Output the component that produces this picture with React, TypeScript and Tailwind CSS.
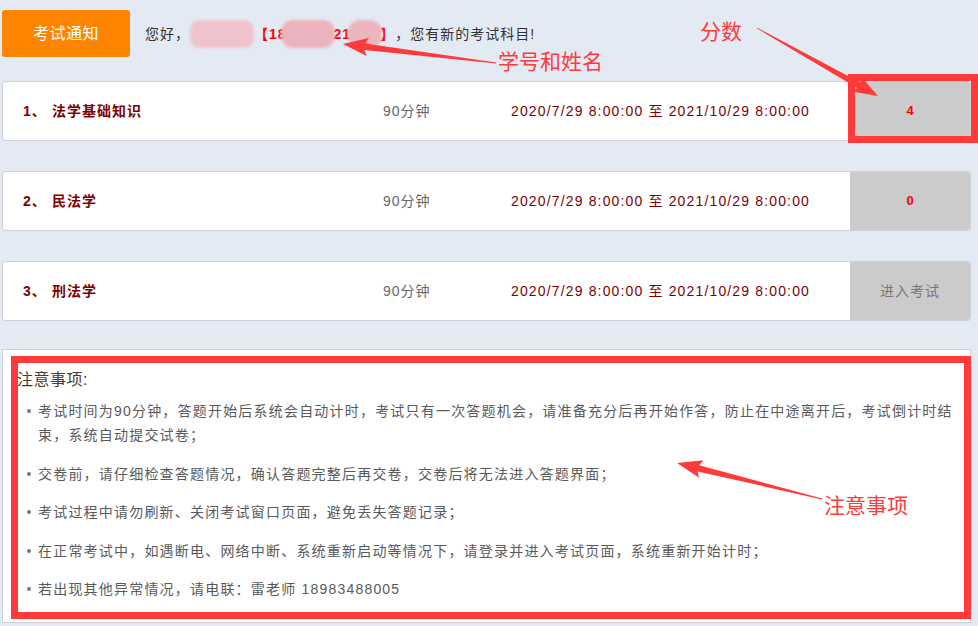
import React from 'react';

type Pt = [number, number];

// tapered annotation arrow: thin tail, wide shaft near the head, triangle head
const arrowPoints = (tail: Pt, tip: Pt, headLen = 22, headHalf = 9, shaftHalf = 3.2) => {
  const dx = tip[0] - tail[0];
  const dy = tip[1] - tail[1];
  const len = Math.hypot(dx, dy);
  const ux = dx / len;
  const uy = dy / len;
  const nx = -uy;
  const ny = ux;
  const bx = tip[0] - ux * headLen;
  const by = tip[1] - uy * headLen;
  const pts: Pt[] = [
    [tail[0] + nx * 0.4, tail[1] + ny * 0.4],
    [bx + nx * shaftHalf, by + ny * shaftHalf],
    [bx - ux * 3 + nx * headHalf, by - uy * 3 + ny * headHalf],
    tip,
    [bx - ux * 3 - nx * headHalf, by - uy * 3 - ny * headHalf],
    [bx - nx * shaftHalf, by - ny * shaftHalf],
    [tail[0] - nx * 0.4, tail[1] - ny * 0.4],
  ];
  return pts.map((p) => `${p[0].toFixed(1)},${p[1].toFixed(1)}`).join(' ');
};

const exams = [
  { no: 1, name: '法学基础知识', score: '4' },
  { no: 2, name: '民法学', score: '0' },
  { no: 3, name: '刑法学', score: null },
];

const notes = [
  '考试时间为90分钟，答题开始后系统会自动计时，考试只有一次答题机会，请准备充分后再开始作答，防止在中途离开后，考试倒计时结束，系统自动提交试卷；',
  '交卷前，请仔细检查答题情况，确认答题完整后再交卷，交卷后将无法进入答题界面；',
  '考试过程中请勿刷新、关闭考试窗口页面，避免丢失答题记录；',
  '在正常考试中，如遇断电、网络中断、系统重新启动等情况下，请登录并进入考试页面，系统重新开始计时；',
  '若出现其他异常情况，请电联：雷老师 18983488005',
];

const font = { fontFamily: '"Liberation Sans", "Noto Sans CJK SC", sans-serif' };

export default function App() {
  return (
    <div className="relative w-[978px] h-[626px] overflow-hidden bg-[#e4eaf4]" style={font}>
      <div className="pl-[2px] pr-[7px] pt-[10px]">
        {/* header */}
        <div className="flex items-center h-[47px]">
          <div className="w-[128px] h-[47px] rounded-[3px] bg-[#ff8500] text-white text-[16px] tracking-[0.5px] flex items-center justify-center">
            考试通知
          </div>
          <div className="ml-[15px] flex items-center text-[14px] tracking-[1px] text-[#333] leading-[24px]">
            <span>您好，</span>
            <span className="inline-block w-[64px] h-[28px] rounded-[10px] bg-[#eec3cb] blur-[1.5px]" />
            <span className="text-[#ff0000] font-bold">【18</span>
            <span className="inline-block w-[54px] h-[28px] -ml-[6px] rounded-[12px] bg-[#ebb3bd] blur-[1.5px]" />
            <span className="text-[#ff0000] font-bold -ml-[1px]">21</span>
            <span className="inline-block w-[34px] h-[28px] -ml-[3px] rounded-[12px] bg-[#ebb5be] blur-[1.5px]" />
            <span className="text-[#ff0000] font-bold -ml-[2px]">】</span>
            <span>，您有新的考试科目!</span>
          </div>
        </div>

        {/* exam list */}
        <div className="mt-[24px] flex flex-col gap-[30px]">
          {exams.map((e) => (
            <div key={e.no} className="flex h-[60px] rounded-[3px] border border-[#cfd0d3] bg-white overflow-hidden">
              <div className="w-[380px] pl-[20px] flex items-center text-[14px] font-bold text-[#800000] tracking-[1px]">
                <span className="w-[29px]">{e.no}、</span>
                <span>{e.name}</span>
              </div>
              <div className="w-[128px] flex items-center text-[14px] text-[#666] tracking-[1px]">90分钟</div>
              <div className="flex-1 flex items-center text-[14px] text-[#800000] tracking-[1.15px]">
                2020/7/29 8:00:00 至 2021/10/29 8:00:00
              </div>
              <div className="w-[120px] bg-[#cbcbcb] flex items-center justify-center text-[14px]">
                {e.score !== null ? (
                  <span className="text-[#ff0000] font-bold text-[13px]">{e.score}</span>
                ) : (
                  <span className="text-[#777] tracking-[1px]">进入考试</span>
                )}
              </div>
            </div>
          ))}
        </div>

        {/* notes */}
        <div className="mt-[28px] h-[274px] border border-[#cfd0d3] bg-white pl-[14px] pr-[8px] pt-[18px]">
          <div className="text-[16px] leading-[24px] text-[#4a3b2c] tracking-[0.5px]">注意事项:</div>
          <ul className="mt-[7px] pl-[10px] flex flex-col gap-[14.5px]">
            {notes.map((n, i) => (
              <li key={i} className="flex text-[14px] leading-[24px] text-[#5a5a5a] tracking-[1.2px]">
                <span className="mt-[10px] mr-[7px] w-[4px] h-[4px] shrink-0 rounded-full bg-[#777]" />
                <span>{n}</span>
              </li>
            ))}
          </ul>
        </div>
      </div>

      {/* annotations drawn over the screenshot */}
      <div className="absolute left-[848px] top-[74px] w-[130px] h-[69px] border-[7px] border-[#ff3a3a]" />
      <div className="absolute left-[11px] top-[356px] w-[960px] h-[263px] border-[7px] border-[#ff3a3a]" />
      <svg className="absolute left-0 top-0 pointer-events-none" width="978" height="626">
        <polygon points={arrowPoints([496, 63], [343, 44])} fill="#ff3a3a" />
        <polygon points={arrowPoints([757, 28], [878, 96])} fill="#ff3a3a" />
        <polygon points={arrowPoints([822, 499], [677, 463])} fill="#ff3a3a" />
      </svg>
      <div className="absolute left-[498px] top-[46px] text-[21px] leading-[28px] text-[#ff3a3a]" style={{ fontFamily: '"Noto Sans CJK SC", sans-serif' }}>
        学号和姓名
      </div>
      <div className="absolute left-[700px] top-[16px] text-[21px] leading-[28px] text-[#ff3a3a]" style={{ fontFamily: '"Noto Sans CJK SC", sans-serif' }}>
        分数
      </div>
      <div className="absolute left-[824px] top-[490px] text-[21px] leading-[28px] text-[#ff3a3a]" style={{ fontFamily: '"Noto Sans CJK SC", sans-serif' }}>
        注意事项
      </div>
    </div>
  );
}
